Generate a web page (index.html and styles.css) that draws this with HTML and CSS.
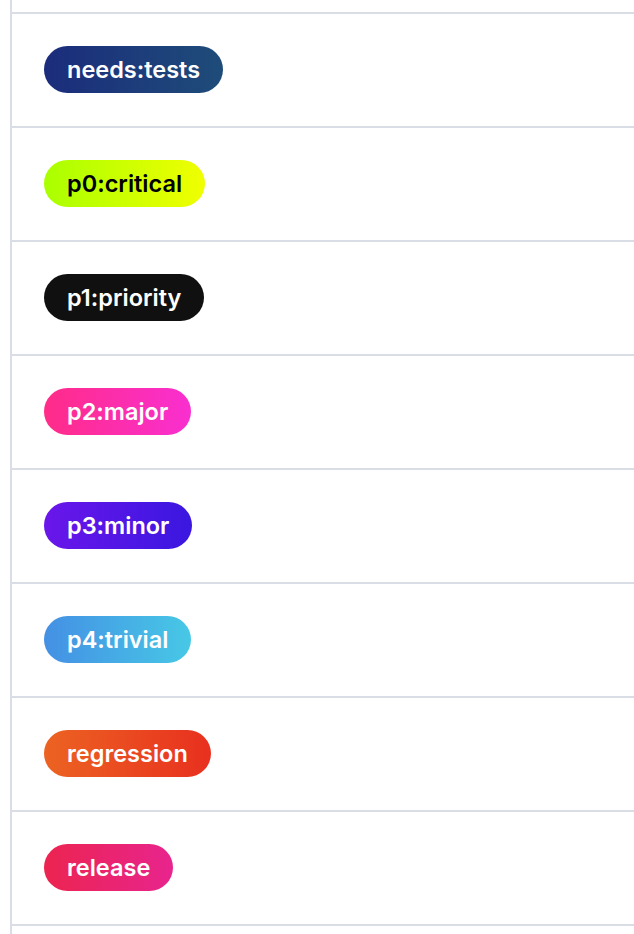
FILE: index.html
```html
<!DOCTYPE html>
<html lang="en">
<head>
    <meta charset="UTF-8">
    <meta name="viewport" content="width=device-width, initial-scale=1.0">
    <title>Labels</title>
    <link rel="stylesheet" href="styles.css">
</head>
<body>
    <div class="label-list">
        <div class="label-row"><span class="label label-tests">needs:tests</span></div>
        <div class="label-row"><span class="label label-p0">p0:critical</span></div>
        <div class="label-row"><span class="label label-p1">p1:priority</span></div>
        <div class="label-row"><span class="label label-p2">p2:major</span></div>
        <div class="label-row"><span class="label label-p3">p3:minor</span></div>
        <div class="label-row"><span class="label label-p4">p4:trivial</span></div>
        <div class="label-row"><span class="label label-regression">regression</span></div>
        <div class="label-row"><span class="label label-release">release</span></div>
    </div>
</body>
</html>
```

FILE: styles.css
```css
/* Label list */
body {
    margin: 0;
    padding: 0;
    background-color: #fff;
    font-family: Inter, "Noto Sans", sans-serif;
}
.label-list {
    margin-left: 10px;
    padding-top: 12px;
    min-height: 100vh;
    box-sizing: border-box;
    border-left: 2px solid #d8dde6;
}
.label-row {
    height: 112px;
    border-top: 2px solid #d8dde6;
    padding-left: 32px;
    display: flex;
    align-items: center;
}
.label-row:last-child {
    border-bottom: 2px solid #d8dde6;
}
.label {
    display: inline-block;
    height: 47px;
    line-height: 47px;
    padding: 0 23px;
    margin-bottom: 1px;
    border-radius: 24px;
    font-size: 23.5px;
    font-weight: 600;
    color: #fff;
    white-space: nowrap;
}
.label-tests {
    background: linear-gradient(to right, #1b2c7c, #1e4c79);
}
.label-p0 {
    background: linear-gradient(to right, #aaff00, #f0ff00);
    color: #000;
}
.label-p1 {
    background: #101010;
}
.label-p2 {
    background: linear-gradient(to right, #ff2c88, #f92fd0);
}
.label-p3 {
    background: linear-gradient(to right, #6a16ea, #3a17e0);
}
.label-p4 {
    background: linear-gradient(to right, #4490e4, #47c8e6);
}
.label-regression {
    background: linear-gradient(to right, #ec6322, #e8301f);
}
.label-release {
    background: linear-gradient(to right, #ec2450, #e8248e);
}
```
